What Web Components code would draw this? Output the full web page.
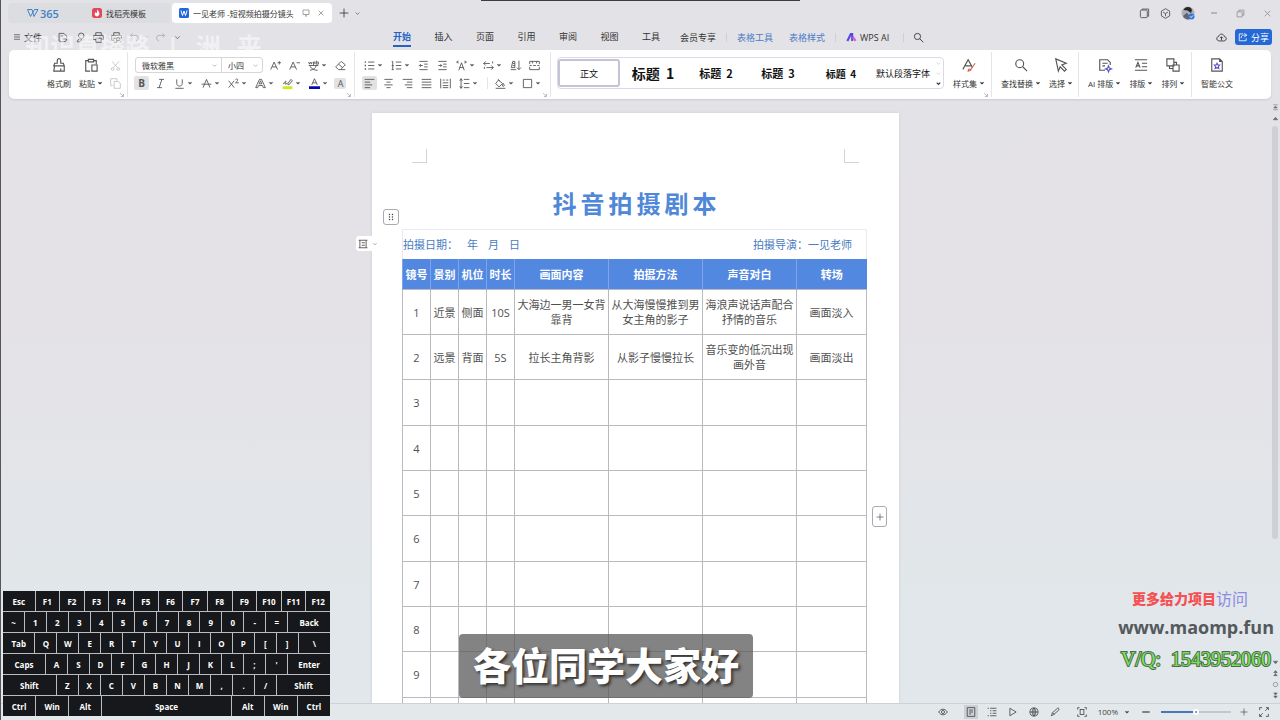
<!DOCTYPE html>
<html lang="zh-CN">
<head>
<meta charset="utf-8">
<title>一见老师 - 短视频拍摄分镜头脚本</title>
<style>
html,body{height:100%;margin:0}
body{font-family:"Open Sans","Noto Sans CJK SC",sans-serif;font-size:9px;color:#333;overflow:hidden}
</style>
</head>
<body>
<wps-app></wps-app>
<script>
const ICONS = {
 menu:'<path d="M2 3.5h12M2 8h12M2 12.500h12"/>',
 plus:'<path d="M8 1v14M1 8h14"/>',
 minus:'<path d="M2 8h12" stroke-width="2"/>',
 close:'<path d="M3 3l10 10M13 3L3 13"/>',
 down:'<path d="M4 6l4 4 4-4"/>',
 caret:'<path d="M4 6l4 4 4-4" stroke-width="3"/>',
 screen:'<path d="M2 2h12v9H2zM6 14h4M8 11v3"/>',
 save:'<path d="M3 13V2h7l4 4v3M5 6h4M3 13l3 1h4c3 0 4-1 4-4H8"/>',
 find:'<circle cx="9" cy="5.500" r="4"/><path d="M9 9v2c0 3-2 4-6 3l3-4"/>',
 print:'<path d="M4 5V1h8v4M4 11H1V5h14v6h-3M4 9h8v6H4z"/>',
 preview:'<path d="M4 5V1h8v4M4 12H1V5h14v5M4 9h4v6H4"/><circle cx="10.500" cy="10.500" r="2.500"/><path d="M12.500 12.500L15 15"/>',
 undo:'<path d="M5 2L2 5l3 3M2 5h8c5 0 5 7 0 8"/>',
 redo:'<path d="M11 2l3 3-3 3M14 5H6c-5 0-5 7 0 8"/>',
 search:'<circle cx="6.500" cy="6.500" r="4.500"/><path d="M10 10l5 5"/>',
 pages:'<rect x="2" y="3" width="10" height="11" rx="1.500"/><path d="M4.500 3V1.500H14V12h-2"/>',
 cube:'<path d="M8 1l6 3.500v7L8 15l-6-3.500v-7zM4.500 6L8 8l3.500-2M8 8v4"/>',
 restore:'<path d="M2 5h9v9H2zM5 5V2h9v9h-3"/>',
 cloud:'<path d="M5 13C0 13 0 7 4 6.500 4.500 2 11.500 2 12 6.500c4 .5 4 6.500-1 6.500zM8 12V7M6 9l2-2 2 2"/>',
 share:'<path d="M8 3H2v11h11v-4M10 2l4 3-4 3M14 5H9c-3 0-4 2-4 5"/>',
 painter:'<path d="M3 6h3V3c0-3 4-3 4 0v3h3l1 3H2zM3 9l-1 6h12V9M10 12v3"/>',
 paste:'<path d="M7 15H2V3h3M11 3h3v4M5 1.500h6v3H5zM9 8h6v7H9z"/>',
 cut:'<path d="M3 2l8 9M13 2L5 11"/><circle cx="4" cy="13" r="2"/><circle cx="12" cy="13" r="2"/>',
 copy:'<path d="M4 11H1V1h9v3M6 5h6l3 3v7H6z"/>',
 bigger:'<path d="M1 14L6 3l5 11M3 10h6M11 4h5M13.500 1.500v5"/>',
 smaller:'<path d="M1 14L6 3l5 11M3 10h6M11 4h5"/>',
 pinyin:'<path d="M1 3l1 3 1.500-3L5 6l1-3M8 6V3h2v3M12 1v5h3V3h-3M1 8h14M8 6v2M3 15c5-1 8-3 9-7M3 9c2 4 6 6 11 6"/>',
 eraser:'<path d="M9 2l6 5-7 7H5l-4-4zM5 6l6 5M8 14h7"/>',
 italic:'<path d="M6 2h7M3 14h7M10 2L6 14"/>',
 under:'<path d="M4 2v6c0 5 8 5 8 0V2M2 15h12"/>',
 strike:'<path d="M3 14L8 2l5 12M1 9h14"/>',
 sup:'<path d="M1 4l8 10M9 4L1 14M11 2c3-2 5 1 0 5h4.500"/>',
 outline:'<path d="M1 14L6.500 2h3L15 14h-3l-1-3H5l-1 3zM6 8.500h4L8 4z"/>',
 high:'<path d="M2 9c3-6 5-5 3-2s2 2 3 0M8 9l5-7 2 2-5 6z"/><path d="M1 14h14" stroke="#c5ef13" stroke-width="4"/>',
 color:'<path d="M4 10L8 1l4 9M5 7h6"/><path d="M0 14h16" stroke="#0705bd" stroke-width="4"/>',
 bullets:'<path d="M6 3h9M6 8h9M6 13h9"/><path d="M1 3h2M1 8h2M1 13h2" stroke-width="2"/>',
 numbers:'<path d="M7 3h8M7 8h8M7 13h8M1 2h1.500v12M1 8h3M1 14h3"/>',
 outdent:'<path d="M2 2h12M9 6h5M9 10h5M2 14h12M7 8H2M4 6L2 8l2 2"/>',
 indent:'<path d="M2 2h12M9 6h5M9 10h5M2 14h12M2 8h5M5 6l2 2-2 2"/>',
 scale:'<path d="M4 15l4-11 4 11M5 11h6M1 3h3M1 3l2-2M1 3l2 2M15 3h-3M15 3l-2-2M15 3l-2 2"/>',
 wrap:'<path d="M4 2L1 5l3 3M1 5h9M14 2v3M12 8l3 3-3 3M15 11H5M2 10v3"/>',
 sort:'<path d="M1 14h8M2 11l2-9h3v9zM4 5h3M4 8h3M13 1v13M10 11l3 3 3-3"/>',
 tabs:'<path d="M1 2h14M1 2v4M15 2v4M5 2v3M11 2v3M1 8h3M6 8h4M12 8h3M1 10v4h14v-4"/>',
 left:'<path d="M1 2h14M1 6h8M1 10h11M1 14h8"/>',
 center:'<path d="M2 2h12M5 6h6M2 10h12M5 14h6"/>',
 right:'<path d="M1 2h14M7 6h8M4 10h11M7 14h8"/>',
 justify:'<path d="M1 2h14M1 6h14M1 10h14M1 14h14"/>',
 distribute:'<path d="M1 1v14M15 1v14M4 3h3M9 3h3M4 7h8M4 11h8M4 14h8"/>',
 spacing:'<path d="M7 2h8M7 8h8M7 14h8M3 1v14M1 4l2-3 2 3M1 12l2 3 2-3"/>',
 fill:'<path d="M5 3l6 5-5 5-5-5zM4 2l3 2M12 8c2 3 2 4 0 4s-1-2 0-4M1 15h14"/>',
 border:'<path d="M2 2h12v12H2z"/>',
 styles:'<path d="M1 13L7 2l5 9M4 9h6"/><path d="M7 15c0-3 2-3 3-1zM10 13l5-7" stroke="#d06a50"/>',
 select:'<path d="M2 1l12 5-5 2 5 5-2 2-5-5-2 5z"/>',
 aidoc:'<path d="M8 14H2V2h9l3 3v3M5 6h6M5 9h3"/><path d="M12 9l1 2.500 2.500 1-2.500 1-1 2.500-1-2.500-2.500-1 2.500-1z" stroke="#5a55c8"/>',
 typeset:'<path d="M1 2h14M1 14h14M2 11l2.500-6L7 11M3 9h3M9 6h6M9 10h6"/>',
 arrange:'<path d="M1 1h8v8H1zM4 9v3h4M9 5h3v3M8 8h7v7H8z"/>',
 official:'<path d="M2 1h9l3 3v11H2zM11 1v3h3"/><path d="M8 6l1 2h2l-1.500 2 .5 2-2-1-2 1 .5-2L5 8h2z" stroke="#5952c7"/>',
 eye:'<path d="M1 8c4-6 10-6 14 0-4 6-10 6-14 0z"/><circle cx="8" cy="8" r="2.500"/>',
 doc:'<path d="M2 1h12v14H2zM5 5h6M5 8h6M5 11h3"/>',
 list:'<path d="M1 2h2M5 2h10M5 6h2M9 6h6M5 10h2M9 10h6M1 14h2M5 14h10"/>',
 play:'<path d="M3 2l10 6-10 6z"/>',
 globe:'<circle cx="8" cy="8" r="6.500"/><path d="M1.500 8h13M8 1.500v13M8 1.500c-4 4-4 9 0 13M8 1.500c4 4 4 9 0 13"/>',
 pen:'<path d="M2 14l2-5 8-7c2-1 3 1 2 3l-8 7zM4 9l3 3"/>',
 focus:'<path d="M1 4V1h3M12 1h3v3M15 12v3h-3M4 15H1v-3"/><rect x="5" y="4" width="6" height="8"/>',
 expand:'<path d="M1 5V1h4M10 6l5-5M11 1h4v4M15 11v4h-4M6 10l-5 5M1 11v4h4"/>',
 corner:'<path d="M3 3l8 8M12 5v7H5"/>',
 up:'<path d="M8 5l5 6H3z" fill="currentColor"/>',
 dn:'<path d="M8 11l5-6H3z" fill="currentColor"/>',
 top:'<path d="M3 2h10M8 5l4 4H4zM3 13h10" fill="currentColor"/>',
 pgup:'<path d="M8 1l4 5H4zM8 8l4 5H4z" fill="currentColor"/>',
 pgdn:'<path d="M8 7l4-5H4zM8 14l4-5H4z" fill="currentColor"/>',
 ring:'<circle cx="8" cy="8" r="5"/>',
 cell:'<path d="M1 2h14M1 14h14M3 2v12M13 2v12M6 6h5M6 10h5"/>',
 grip:'<g fill="currentColor" stroke="none"><circle cx="5" cy="3" r="1.500"/><circle cx="11" cy="3" r="1.500"/><circle cx="5" cy="8" r="1.500"/><circle cx="11" cy="8" r="1.500"/><circle cx="5" cy="13" r="1.500"/><circle cx="11" cy="13" r="1.500"/></g>',
 ailogo:'<path d="M2 13L7 3h2v10" stroke="#5346e8" stroke-width="3"/><path d="M10 7l4 6" stroke="#e05ad0" stroke-width="3"/>'
};
const RESET = ':host{box-sizing:border-box}*{box-sizing:border-box}button{font:inherit;color:inherit;background:none;border:0;padding:0;margin:0;display:flex;align-items:center;justify-content:center}a{color:inherit;text-decoration:none}';
function define(tag, css, html) {
  customElements.define(tag, class extends HTMLElement {
    constructor() {
      super();
      const t = document.createElement('template');
      t.innerHTML = '<style>' + RESET + css + '</style>' + html;
      this.attachShadow({mode: 'open'}).append(t.content.cloneNode(true));
    }
  });
}
customElements.define('ui-icon', class extends HTMLElement {
  connectedCallback() {
    if (this.shadowRoot) return;
    this.attachShadow({mode: 'open'}).innerHTML =
      '<style>:host{display:inline-flex;flex:none;width:var(--s,11px);height:var(--s,11px)}svg{width:100%;height:100%;overflow:visible}</style>' +
      '<svg viewBox="0 0 16 16" fill="none" stroke="currentColor" stroke-width="1.300" aria-hidden="true">' + ICONS[this.getAttribute('name')] + '</svg>';
  }
});
/* Small ribbon button; "caret" adds a drop-down arrow, "glyph" shows a letter. */
customElements.define('tool-button', class extends HTMLElement {
  connectedCallback() {
    if (this.shadowRoot) return;
    const g = this.getAttribute('glyph'), i = this.getAttribute('icon');
    this.attachShadow({mode: 'open'}).innerHTML = '<style>' + RESET +
      ':host{display:flex;flex:none;width:19px;height:18px;align-items:center;color:#555}:host([caret]){width:27px}:host([off]){color:#c4c4c8}button{height:14px;width:100%;justify-content:flex-start;gap:2px;padding-left:4px;font-size:10px;font-weight:700}:host([on]) button{background:#e2e2e5;border-radius:2px;width:15px;margin-left:2px;padding-left:2px}.c{--s:6px}span{width:11px;text-align:center}:host([label]) button{height:11px;width:12px;padding-left:1px;font-size:9px;font-weight:400}</style>' +
      '<button aria-label="' + (this.getAttribute('label') || i || g) + '">' + (g ? '<span>' + g + '</span>' : '<ui-icon name="' + i + '"></ui-icon>') + (this.hasAttribute('caret') ? '<ui-icon class="c" name="caret"></ui-icon>' : '') + '</button>';
  }
});
/* Large ribbon button: icon over a text label. */
customElements.define('big-button', class extends HTMLElement {
  connectedCallback() {
    if (this.shadowRoot) return;
    this.attachShadow({mode: 'open'}).innerHTML = '<style>' + RESET +
      ':host{display:block;flex:none;color:#555}button{flex-direction:column;justify-content:flex-start;padding-top:2px;gap:2px;white-space:nowrap;--s:14px}.l{display:flex;align-items:center;gap:2px;height:18px;font-size:8px;color:#333}.c{--s:6px}</style>' +
      '<button><ui-icon name="' + this.getAttribute('icon') + '"></ui-icon><span class="l"><slot></slot>' + (this.hasAttribute('caret') ? '<ui-icon class="c" name="caret"></ui-icon>' : '') + '</span></button>';
  }
});
define('title-bar', `
:host{display:flex;height:26px;align-items:center;padding:0 4px 0 7px;font-size:8px}
.tab{height:20px;display:flex;align-items:center;white-space:nowrap;background:#dcdde0}
.home{width:74px;border-radius:4px 0 0 4px;padding-left:18px;color:#4282c7;font-size:11px;font-weight:600}
.home svg{width:14px;height:10px}
.tpl{width:88px;padding-left:10px;gap:4px}
.tpl svg,.cur svg{width:10px;height:10px;flex:none}
.cur{width:160px;background:#fff;border-radius:4px;padding:0 7px;gap:4px;margin-left:2px}
.name{width:105px}
.cur ui-icon{--s:8px;color:#777}
.cur ui-icon:last-child{margin-left:3px}
.new{--s:10px;margin-left:4px;gap:5px;width:28px}.new ui-icon+ui-icon{--s:7px}
.win{margin-left:auto;display:flex;align-items:center;gap:10px;--s:11px;color:#555}
.ava{width:14px;height:14px}
.dim{color:#888;width:17px}`,
`<a class="tab home" href="#"><svg viewBox="0 0 26 20" fill="none" stroke="currentColor" stroke-width="2"><path d="M2 3h9l4 14 8-14h-7L8 17 2 3"/></svg>365</a>
<a class="tab tpl" href="#"><svg viewBox="0 0 20 20"><rect width="20" height="20" rx="5" fill="#e4465a"/><path d="M10 3c6 5 7 12 0 14-7-2-5-7-2-9 0 3 2 3 2 0z" fill="#fff"/></svg>找稻壳模板</a>
<a class="tab cur" href="#"><svg viewBox="0 0 20 20"><rect width="20" height="20" rx="3" fill="#2467dc"/><path d="M4 5l3 10 3-9 3 9 3-10" fill="none" stroke="#fff" stroke-width="2"/></svg><span class="name">一见老师 -短视频拍摄分镜头</span><ui-icon name="screen"></ui-icon><ui-icon name="close"></ui-icon></a>
<button class="new" aria-label="新建"><ui-icon name="plus"></ui-icon><ui-icon name="down"></ui-icon></button>
<div class="win"><ui-icon name="pages"></ui-icon><ui-icon name="cube"></ui-icon>
<svg class="ava" viewBox="0 0 28 28"><circle cx="14" cy="14" r="13" fill="#aeb0b6"/><path d="M5 8C8 0 20 0 22 8l-2 6-7-5z" fill="#26262b"/><path d="M4 20l8-7 8 12c-6 4-13 2-16-5z" fill="#63656d"/><circle cx="21" cy="21" r="6" fill="#3773df"/><path d="M18 21l2 2 4-4" fill="none" stroke="#fff" stroke-width="2"/></svg>
<button class="dim" aria-label="最小化" style="--s:8px"><ui-icon name="minus"></ui-icon></button><button class="dim" aria-label="还原" style="--s:9px"><ui-icon name="restore"></ui-icon></button><button class="dim" aria-label="关闭" style="--s:9px"><ui-icon name="close"></ui-icon></button></div>`);
define('menu-bar', `
:host{display:flex;height:24px;align-items:center;padding:0 8px 2px 12px;position:relative;white-space:nowrap}
.quick{display:flex;align-items:center;flex:none;width:380px;gap:7px;color:#555}
.file{gap:3px;color:#333;margin-right:8px;--s:8px}
.off{opacity:.35}
.drop{--s:6px;margin:0 -2px 0 -3px}
.tabs{display:flex;justify-content:space-between;flex:none;width:267px}
.tabs a{height:20px;line-height:20px}
.on{color:#2562c4;font-weight:700;border-bottom:2px solid #2562c4}
.more{display:flex;align-items:center;gap:10px;margin-left:20px}
.ctx+.ctx{margin-left:6px}
.ctx{color:#4a7cc4}
.bar{width:1px;height:9px;background:#cfd0d5}
.ai{display:flex;align-items:center;gap:3px}
.end{margin-left:auto;display:flex;align-items:center;gap:8px}
.share{width:37px;height:16px;border-radius:3px;background:#2469d6;color:#fff;gap:3px}
.ghost{position:absolute;left:24px;top:8px;display:flex;gap:16px;font-size:25px;line-height:24px;font-weight:700;color:rgba(255,255,255,.5);pointer-events:none}`,
`<div class="ghost" aria-hidden="true"><span>知识直播路</span><span>|</span><span>洲</span><span>来</span></div>
<div class="quick"><button class="file"><ui-icon name="menu"></ui-icon>文件</button><ui-icon name="save"></ui-icon><ui-icon name="find"></ui-icon><ui-icon name="print"></ui-icon><ui-icon name="preview"></ui-icon><ui-icon class="off" name="undo"></ui-icon><ui-icon class="off drop" name="down"></ui-icon><ui-icon class="off" name="redo"></ui-icon><ui-icon name="down" style="--s:9px"></ui-icon></div>
<nav class="tabs"><a class="on" href="#">开始</a><a href="#">插入</a><a href="#">页面</a><a href="#">引用</a><a href="#">审阅</a><a href="#">视图</a><a href="#">工具</a></nav>
<nav class="more"><a href="#">会员专享</a><i class="bar"></i><a class="ctx" href="#">表格工具</a><a class="ctx" href="#">表格样式</a><i class="bar"></i><a class="ai" href="#"><ui-icon name="ailogo"></ui-icon>WPS AI</a><i class="bar" style="margin:0 -1px 0 4px"></i><ui-icon name="search"></ui-icon></nav>
<div class="end"><ui-icon name="cloud"></ui-icon><button class="share"><ui-icon name="share" style="--s:10px"></ui-icon>分享</button></div>`);
const B = (s) => s.split(' ').map(x => {
  const off = x.includes('-'), caret = x.includes('+'), on = x.includes('*');
  return `<tool-button icon="${x.replace(/[-+*]/g,'')}"${off?' off':''}${caret?' caret':''}${on?' on':''}></tool-button>`;
}).join('');
define('ribbon-bar', `
:host{display:flex;margin:0 9px 0 8px;height:49px;background:#fff;border-radius:5px;box-shadow:0 1px 2px #c9cbd0;white-space:nowrap;overflow:hidden;flex:none}
.g{display:flex;position:relative;padding-top:4px;border-right:1px solid #e4e5e9;flex:none;margin:2px 0}
.g.last{border:0}
.row{display:flex;height:18px;align-items:center}
.clip{width:119px;padding-left:38px;gap:8px}
.font{width:227px;padding-left:4px;flex-direction:column}
.para{width:196px;padding-left:5px;flex-direction:column}
.look{width:441px;padding-left:6px;gap:9px}
.find{width:87px;padding-left:9px;gap:8px}
.lay{width:113px;padding-left:9px;gap:8px}
.last{padding-left:9px}
.corner{position:absolute;right:2px;bottom:-1px;--s:6px;color:#777}
.box{position:relative;display:flex;align-items:center;height:16px;border:1px solid #d5d6da;border-radius:3px 0 0 3px;margin-left:3px;width:87px}
.box+.box{margin:0 3px 0 -1px;width:42px;border-radius:0 3px 3px 0}
select{appearance:none;border:0;background:none;font:inherit;font-size:8px;color:#333;width:100%;padding:0 0 0 6px}
.box ui-icon{position:absolute;right:3px;--s:7px;color:#888}
.sep{width:1px;height:12px;background:#e4e5e9;margin:0 3px 0 5px}
.gal{display:flex;align-items:center;width:387px;height:32px;border:1px solid #d9dae3;border-radius:4px;color:#111;margin-top:1px}
.gal button{flex:none;height:28px}
.pick{width:62px;border:2px solid #c3c5d4;border-radius:3px;font-size:9px}
.h{font-weight:700;font-family:"Noto Sans CJK SC",sans-serif}
.arr{display:flex;flex-direction:column;margin-left:auto;gap:3px;--s:7px;color:#bbb;padding-right:1px}
.arr ui-icon:last-child{color:#444}`,
`<div class="g clip"><big-button icon="painter">格式刷</big-button><big-button icon="paste" caret>粘贴</big-button><div style="margin-left:-5px"><tool-button icon="cut" off></tool-button><tool-button icon="copy" off></tool-button></div><ui-icon class="corner" name="corner"></ui-icon></div>
<div class="g font"><div class="row"><label class="box"><select aria-label="字体"><option>微软雅黑</option></select><ui-icon name="down"></ui-icon></label><label class="box"><select aria-label="字号"><option>小四</option></select><ui-icon name="down"></ui-icon></label>${B('bigger smaller pinyin+ eraser')}</div>
<div class="row"><tool-button glyph="B" on></tool-button>${B('italic under+ strike+ sup+ outline+ high+ color+')}<tool-button glyph="A" label="字符底纹" on></tool-button></div><ui-icon class="corner" name="corner"></ui-icon></div>
<div class="g para"><div class="row">${B('bullets+ numbers+ outdent indent scale+ wrap+ sort tabs')}</div><div class="row">${B('left* center right justify distribute spacing+')}<i class="sep"></i>${B('fill+ border+')}</div><ui-icon class="corner" name="corner"></ui-icon></div>
<div class="g look"><div class="gal"><button class="pick">正文</button><button class="h" style="width:66px;font-size:14px">标题&nbsp; 1</button><button class="h" style="width:60px;font-size:11px">标题&nbsp; 2</button><button class="h" style="width:64px;font-size:11px">标题&nbsp; 3</button><button class="h" style="width:62px;font-size:10px">标题&nbsp; 4</button><button style="width:62px">默认段落字体</button><div class="arr"><ui-icon name="down"></ui-icon><ui-icon name="down"></ui-icon><ui-icon name="caret"></ui-icon></div></div><big-button icon="styles" caret>样式集</big-button><ui-icon class="corner" name="corner"></ui-icon></div>
<div class="g find"><big-button icon="search" caret>查找替换</big-button><big-button icon="select" caret>选择</big-button></div>
<div class="g lay"><big-button icon="aidoc" caret>AI 排版</big-button><big-button icon="typeset" caret>排版</big-button><big-button icon="arrange" caret>排列</big-button></div>
<div class="g last"><big-button icon="official">智能公文</big-button></div>`);
const ROWS = [['1','近景','侧面','10S','大海边一男一女背靠背','从大海慢慢推到男女主角的影子','海浪声说话声配合抒情的音乐','画面淡入'],
 ['2','远景','背面','5S','拉长主角背影','从影子慢慢拉长','音乐变的低沉出现画外音','画面淡出']];
for (let n = 3; n < 10; n++) ROWS.push([String(n),'','','','','','','']);
ROWS.push(['','','','','','','','']);
define('shot-table', `
:host{display:block;font-size:11px;color:#505050}
.info{display:flex;justify-content:space-between;align-items:center;height:30px;padding:0 14px 2px 0;color:#4a7cc0;border:1px solid #e9e9f2;border-bottom:0}
.date{display:flex;gap:10px}.date b{font-weight:400}.date b:first-child{margin-right:-1px}
table{border-collapse:collapse;table-layout:fixed;width:100%}
th{height:30px;background:#5388e0;color:#fff;font-weight:700;padding:0;border-left:1px solid #7fa5e8}
td{height:45px;padding:1px 2px 0;border:1px solid #b9b9c0;text-align:center;line-height:15px}
tr:nth-child(3n) td{height:46px}`,
`<div class="info"><span class="date"><b>拍摄日期：</b><b>年</b><b>月</b><b>日</b></span><span>拍摄导演：一见老师</span></div>
<table><colgroup><col style="width:28px"><col style="width:28px"><col style="width:28px"><col style="width:28px"><col style="width:94px"><col style="width:94px"><col style="width:94px"><col></colgroup>
<thead><tr>${['镜号','景别','机位','时长','画面内容','拍摄方法','声音对白','转场'].map(h=>`<th scope="col">${h}</th>`).join('')}</tr></thead>
<tbody>${ROWS.map(r=>'<tr>'+r.map(c=>`<td>${c}</td>`).join('')+'</tr>').join('')}</tbody></table>`);
define('doc-page', `
:host{display:block;position:relative;width:527px;flex:none;background:#fff;box-shadow:0 0 3px #cccdd2;padding:36px 32px 0 30px}
.marks{display:flex;justify-content:space-between;padding:0 8px 0 10px}
.marks i{width:15px;height:14px;border:solid #d0d3dc;border-width:0 1px 1px 0}
.marks i+i{border-width:0 0 1px 1px}
h1{margin:21px 0 5px;padding:0 0 0 4px;font-size:24px;line-height:40px;letter-spacing:4px;text-align:center;color:#4f87d9;font-weight:700}
.float{position:absolute;background:#fff;border:1px solid #aaaab0;border-radius:3px;color:#444}
.grip{left:11px;top:96px;width:16px;height:16px;--s:8px}
.cell{left:-16px;top:123px;width:24px;height:15px;border:0;gap:4px;--s:10px}
.add{right:12px;top:393px;width:15px;height:21px;--s:8px}`,
`<div class="marks"><i></i><i></i></div><h1>抖音拍摄剧本</h1><shot-table></shot-table>
<button class="float grip" aria-label="移动表格"><ui-icon name="grip"></ui-icon></button><button class="float cell" aria-label="布局选项"><ui-icon name="cell"></ui-icon><ui-icon name="down" style="--s:6px"></ui-icon></button><button class="float add" aria-label="添加列"><ui-icon name="plus"></ui-icon></button>`);
define('scroll-rail', `
:host{display:flex;flex-direction:column;align-items:center;width:10px;flex:none;padding:5px 0 4px;--s:7px;color:#666;gap:4px}
.track{flex:1;width:6px;display:flex;flex-direction:column}
.thumb{flex:0 1 78%;border-radius:3px;background:#cfd0d5}`,
`<ui-icon name="top"></ui-icon><ui-icon name="up"></ui-icon><div class="track"><div class="thumb"></div></div><ui-icon name="dn"></ui-icon><ui-icon name="pgup"></ui-icon><ui-icon name="ring"></ui-icon><ui-icon name="pgdn"></ui-icon>`);
define('status-bar', `
:host{display:flex;height:17px;flex:none;justify-content:flex-end;align-items:center;padding:0 11px 1px 0;border-top:1px solid #cdd2d6;background:#e3e8eb;--s:10px;color:#444;gap:11px;font-size:8px}
.on{background:#ccd0d4;outline:2px solid #ccd0d4;margin-left:7px}
.focus{margin-left:6px}
.pct{display:flex;align-items:center;gap:6px}
.pct ui-icon{--s:6px}
input{appearance:none;width:70px;height:10px;margin:0 -2px 0 -1px;background:linear-gradient(to right,#4976ba 50%,#c3c7cd 50%) center/100% 2px no-repeat}
input::-webkit-slider-thumb{appearance:none;width:6px;height:6px;border-radius:50%;background:#5a7fb9;border:2px solid #fff}`,
`<ui-icon name="eye"></ui-icon><ui-icon class="on" name="doc"></ui-icon><ui-icon name="list"></ui-icon><ui-icon name="play"></ui-icon><ui-icon name="globe"></ui-icon><ui-icon name="pen"></ui-icon><ui-icon class="focus" name="focus"></ui-icon><span class="pct">100%<ui-icon name="caret"></ui-icon></span><ui-icon name="minus"></ui-icon><input type="range" aria-label="缩放" value="50"><ui-icon name="plus" style="--s:8px"></ui-icon><ui-icon name="expand"></ui-icon>`);
const KEYS = [
 [['Esc',4],...[1,2,3,4,5,6,7,8,9,10,11,12].map(n=>['F'+n,3])],
 [...'~1234567890-='].map(k=>[k,2]).concat([['Back',4]]),
 [['Tab',3],...[...'QWERTYUIOP[]'].map(k=>[k,2]),['\\',3]],
 [['Caps',4],...[...'ASDFGHJKL;\''].map(k=>[k,2]),['Enter',4]],
 [['Shift',5],...[...'ZXCVBNM,./'].map(k=>[k,2]),['Shift',5]],
 [['Ctrl',3],['Win',3],['Alt',3],['Space',12],['Alt',3],['Win',3],['Ctrl',3]]];
define('key-board', `
:host{display:flex;flex-direction:column;gap:1px;width:327px;background:#b9bcc0;font-size:8px;font-weight:700;color:#fff}
div{display:flex;gap:1px;height:20px}
kbd{flex:1 1 0;min-width:0;display:flex;align-items:center;justify-content:center;background:#17181b;font-family:"Open Sans",sans-serif}`,
 KEYS.map(r=>'<div>'+r.map(([k,w])=>`<kbd style="flex-grow:${w}">${k}</kbd>`).join('')+'</div>').join(''));
define('caption-box', `
:host{display:block;height:64px;padding:0 14px;border-radius:4px;background:rgba(90,90,90,.75);color:#fff;font:900 38px/60px "Noto Sans CJK SC",sans-serif;text-shadow:2px 2px 3px #333;white-space:nowrap}`, `<slot></slot>`);
define('promo-note', `
:host{display:flex;flex-direction:column;align-items:center;gap:2px;white-space:nowrap}
p{margin:0;height:28px;line-height:28px}
.a{font-size:14px;font-weight:900;color:#f55054;padding-right:12px;display:flex}.a span{font-size:16px;font-weight:400;color:#8f8be0}
.b{font-size:18px;line-height:24px;font-weight:700;color:#55595c}
.c{font:20px/28px "Liberation Serif",serif;color:#7be05a;-webkit-text-stroke:2px #4b6b4c;paint-order:stroke fill}`,
`<p class="a">更多给力项目<span>访问</span></p><p class="b">www.maomp.fun</p><p class="c">V/Q:&nbsp; 1543952060</p>`);
define('wps-app', `
:host{display:flex;flex-direction:column;height:100vh;position:relative;overflow:hidden;border-left:1px solid #55565a;background:linear-gradient(#e3e2e6,#e4e2e7 45%,#e1e7ea 85%)}
.work{display:flex;flex:1;min-height:0;overflow:hidden}
.canvas{flex:1;display:flex;justify-content:center;overflow:hidden;padding-top:14px}
.edge{position:absolute;top:0;left:37.500%;width:25%;height:1px;background:#3c3c42}
key-board{position:absolute;left:2px;bottom:4px}
caption-box{position:absolute;left:458px;bottom:22px}
promo-note{position:absolute;right:6px;bottom:47px}`,
`<title-bar></title-bar><menu-bar></menu-bar><ribbon-bar></ribbon-bar>
<div class="work"><div class="canvas"><doc-page></doc-page></div><scroll-rail></scroll-rail></div>
<status-bar></status-bar><div class="edge"></div>
<key-board></key-board><caption-box>各位同学大家好</caption-box><promo-note></promo-note>`);
</script>
</body>
</html>
